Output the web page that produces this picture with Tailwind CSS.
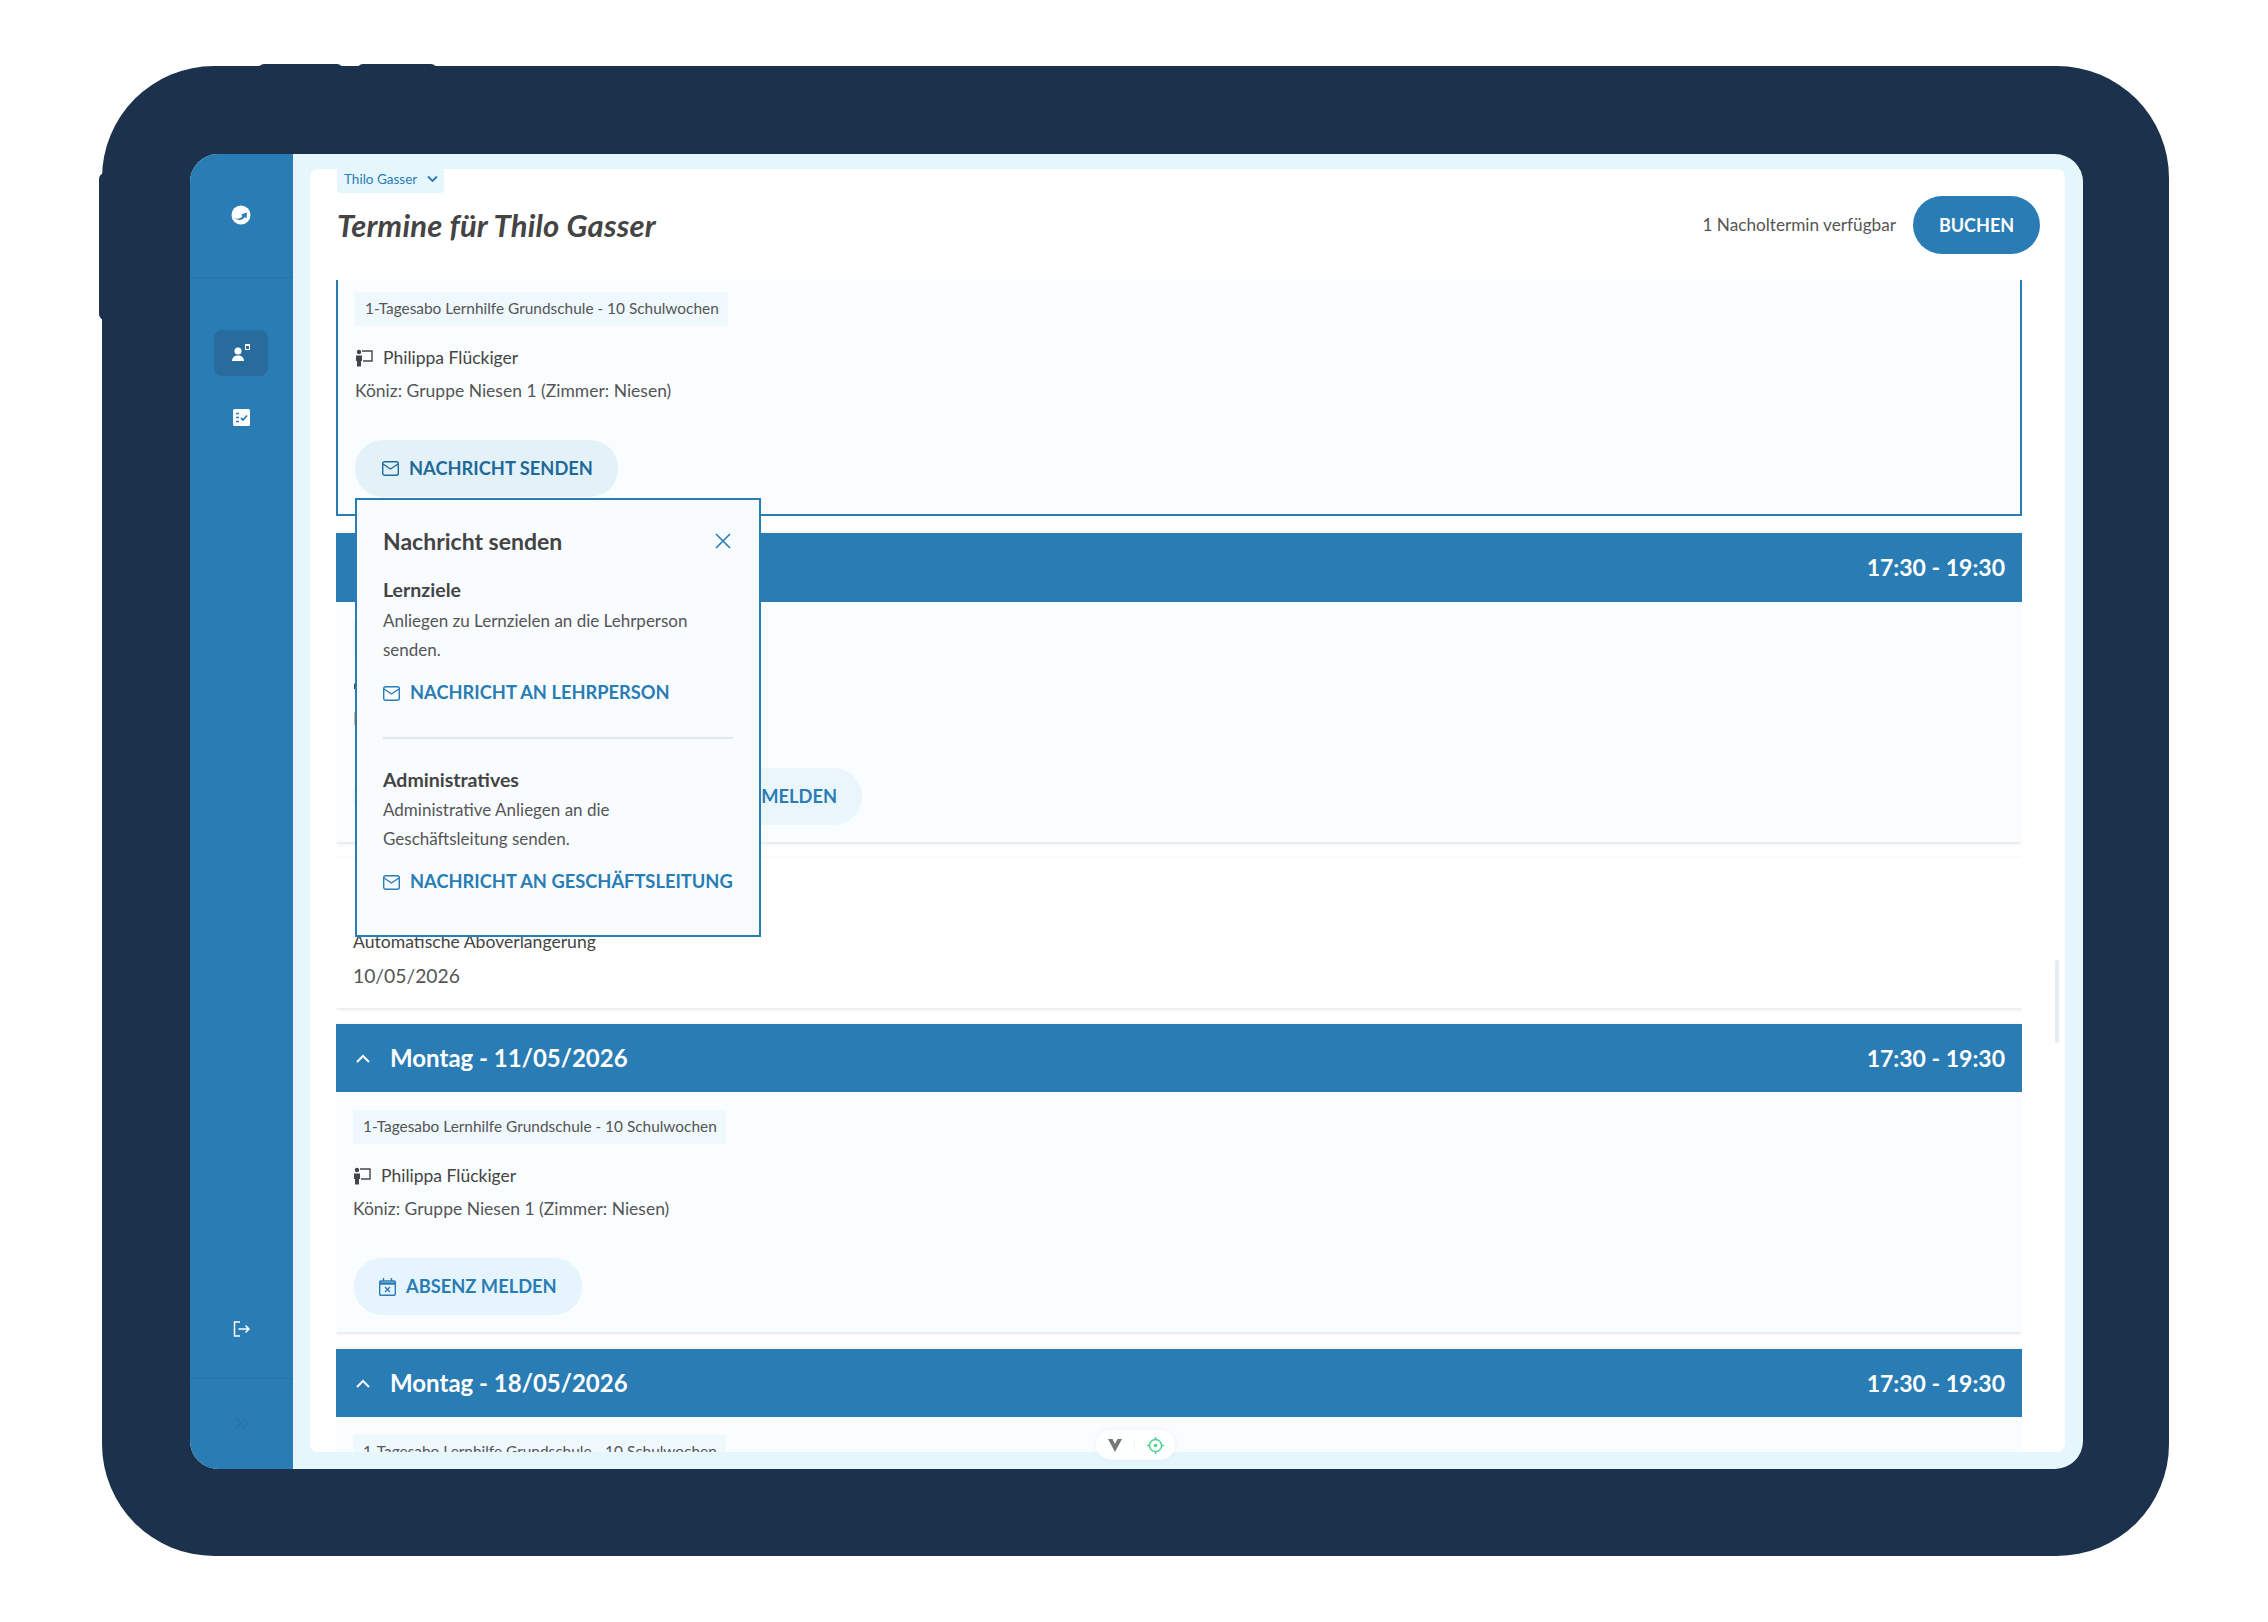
<!DOCTYPE html>
<html lang="de">
<head>
    <meta charset="UTF-8">
    <meta name="viewport" content="width=device-width, initial-scale=1.0">
    <title>Termine</title>
    <script src="https://cdn.jsdelivr.net/npm/@tailwindcss/browser@4"></script>
</head>
<body class="bg-white font-['Lato','Liberation_Sans',sans-serif] text-[#4a4a4a] antialiased">

    <!-- tablet frame -->
    <div class="relative mt-[66px] ml-[102px] w-[2067px] h-[1490px] rounded-[112px] bg-[#1c324c] pt-[88px] pl-[88px]">
        <div class="absolute left-[156px] top-[-2px] w-[85px] h-[6px] rounded-t-md bg-[#1c324c]"></div>
        <div class="absolute left-[255px] top-[-2px] w-[80px] h-[6px] rounded-t-md bg-[#1c324c]"></div>
        <div class="absolute left-[-3px] top-[107px] w-[6px] h-[147px] rounded-l-md bg-[#1c324c]"></div>

        <!-- screen -->
        <div class="flex w-[1893px] h-[1315px] rounded-[28px] overflow-hidden bg-[#e6f6fd]">

            <!-- sidebar -->
            <aside class="flex flex-col items-center w-[103px] shrink-0 bg-[#2a7cb4]">
                <div class="flex items-center justify-center w-full h-[124px] pr-[2px] pb-[1px] border-b border-[#2673a8]">
                    <svg class="w-[20px] h-[20px]" viewBox="0 0 20 20">
                        <circle cx="10" cy="10" r="9.500" fill="#fff"/>
                        <path d="M3 12.500c3 2 6.500 1.500 8.500-1.500L10 9.500l6-2-.5 6-1.700-1.500c-2.500 3.500-7.300 4-10.800.5z" fill="#2a7cb4"/>
                    </svg>
                </div>
                <div class="flex items-center justify-center w-[54px] h-[46px] mt-[52px] mr-[1px] rounded-lg bg-[#286c9e]">
                    <svg class="w-[20px] h-[18px]" viewBox="0 0 20 18" fill="#fff">
                        <circle cx="7" cy="7" r="3.500"/>
                        <path d="M1 17c0-3.500 2.500-5.500 6-5.500s6 2 6 5.500z"/>
                        <path fill-rule="evenodd" d="M14 0h5v6h-5zM15 2v3h3V2z"/>
                    </svg>
                </div>
                <div class="flex items-center justify-center w-full h-[20px] mt-[31px] pr-[1px]">
                    <svg class="w-[17px] h-[17px]" viewBox="0 0 17 17">
                        <rect width="17" height="17" rx="1.500" fill="#fff"/>
                        <path d="M3 4.500h3M3 8.500h3M3 12.500h3" stroke="#2a7cb4" stroke-width="1.500"/>
                        <path d="M8 9l2 2 4-4.500" stroke="#2a7cb4" stroke-width="1.800" fill="none"/>
                    </svg>
                </div>
                <div class="flex items-center justify-center w-full h-[20px] mt-auto mb-[39px] pr-[1px]">
                    <svg class="w-[17px] h-[16px]" viewBox="0 0 17 16" fill="none" stroke="#fff" stroke-width="1.500">
                        <path d="M7 1H1.500v14H7M5.500 8H16M12.500 4.500 16 8l-3.500 3.500"/>
                    </svg>
                </div>
                <div class="flex items-center justify-center w-full h-[91px] pb-[3px] border-t border-[#2673a8]">
                    <svg class="w-[16px] h-[14px]" viewBox="0 0 16 14" fill="none" stroke="#2673a8" stroke-width="1.500">
                        <path d="m1.500 1 6 6-6 6M8 1l6 6-6 6"/>
                    </svg>
                </div>
            </aside>

            <!-- main -->
            <main class="flex-1 min-w-0 pt-[15px] pr-[18px] pb-[17px] pl-[17px]">
                <div class="relative flex flex-col h-full rounded-lg bg-white overflow-hidden">

                    <div class="pl-[27px] pr-[25px]">
                        <div class="flex items-center gap-[10px] w-[107px] h-[24px] pl-[7px] pb-[4px] rounded-b-sm bg-[#e6f6fd] text-[13.5px] text-[#2a7cb4]">
                            Thilo Gasser
                            <svg class="w-[11px] h-[8px]" viewBox="0 0 11 8" fill="none" stroke="#2a7cb4" stroke-width="1.800"><path d="m1 1.500 4.500 4.500L10 1.500"/></svg>
                        </div>
                        <div class="flex items-center justify-between h-[58px] mt-[3px]">
                            <h1 class="text-[31px] tracking-[0.2px] font-bold italic text-[#444]">Termine für Thilo Gasser</h1>
                            <div class="flex items-center gap-[17px]">
                                <span class="text-[17.2px] text-[#555]">1 Nacholtermin verfügbar</span>
                                <button class="w-[127px] h-[58px] rounded-full bg-[#2a7cb4] text-[18px] font-bold text-white">BUCHEN</button>
                            </div>
                        </div>
                    </div>

                    <!-- appointment list -->
                    <div class="flex flex-col gap-[16px] h-0 flex-1 mt-[26px] ml-[26px] mr-[43px] overflow-hidden">

                        <div class="shrink-0 h-[236px] px-[17px] pt-[12px] border-2 border-t-0 border-[#2a7cb4] bg-[#fafdff]">
                            <div class="flex items-center w-[373px] h-[34px] pl-[10px] bg-[#eef8fd] text-[15.4px] text-[#555]">1-Tagesabo Lernhilfe Grundschule - 10 Schulwochen</div>
                            <div class="flex items-center gap-[10px] h-[24px] mt-[20px] text-[17.5px] text-[#444]">
                                <svg class="w-[18px] h-[18px]" viewBox="0 0 18 18"><circle cx="4" cy="3" r="2.200" fill="#444"/><path d="M1 6.500h6V12H6v5.500H2V12H1z" fill="#444"/><path d="M7 2h10v10H8" fill="none" stroke="#444" stroke-width="1.400"/></svg>
                                Philippa Flückiger
                            </div>
                            <div class="flex items-center h-[24px] mt-[9px] text-[17.5px] text-[#555]">Köniz: Gruppe Niesen 1 (Zimmer: Niesen)</div>
                            <button class="flex items-center gap-[10px] w-[263px] h-[57px] mt-[37px] pl-[27px] rounded-[28px] bg-[#e3f1f9] text-[18.3px] font-bold text-[#1f6a99]">
                                <svg class="w-[17px] h-[15px]" viewBox="0 0 17 15" fill="none" stroke="#1f6a99" stroke-width="1.400"><rect x=".7" y=".7" width="15.600" height="13.600" rx="2"/><path d="m1 3 7.500 5L16 3"/></svg>
                                NACHRICHT SENDEN
                            </button>
                        </div>

                        <div class="shrink-0 mt-[1px] shadow-[0_1px_4px_rgba(0,0,0,0.14)] bg-[#fafdff]">
                            <div class="flex items-center justify-between h-[69px] pl-[20px] pr-[17px] bg-[#2a7cb4] text-white font-bold">
                                <div class="flex items-center gap-[20px] text-[24px]">
                                    <svg class="w-[14px] h-[9px]" viewBox="0 0 14 9" fill="none" stroke="#fff" stroke-width="2"><path d="m1 8 6-6 6 6"/></svg>
                                    Montag - 04/05/2026
                                </div>
                                <span class="text-[23px]">17:30 - 19:30</span>
                            </div>
                            <div class="h-[240px] px-[17px] pt-[18px]">
                                <div class="flex items-center w-[373px] h-[34px] pl-[10px] bg-[#eef8fd] text-[15.4px] text-[#555]">1-Tagesabo Lernhilfe Grundschule - 10 Schulwochen</div>
                                <div class="flex items-center gap-[10px] h-[24px] mt-[20px] text-[17.5px] text-[#444]">
                                    <svg class="w-[18px] h-[18px]" viewBox="0 0 18 18"><circle cx="4" cy="3" r="2.200" fill="#444"/><path d="M1 6.500h6V12H6v5.500H2V12H1z" fill="#444"/><path d="M7 2h10v10H8" fill="none" stroke="#444" stroke-width="1.400"/></svg>
                                    Philippa Flückiger
                                </div>
                                <div class="flex items-center h-[24px] mt-[9px] text-[17.5px] text-[#555]">Köniz: Gruppe Niesen 1 (Zimmer: Niesen)</div>
                                <button class="flex items-center justify-end w-[509px] h-[57px] mt-[37px] pr-[25px] rounded-[28px] bg-[#eaf6fc] text-[18.3px] font-bold text-[#2a7cb4]">ABSENZ MELDEN</button>
                            </div>
                        </div>

                        <div class="shrink-0 h-[150px] pl-[17px] pt-[71px] shadow-[0_1px_4px_rgba(0,0,0,0.12)] bg-white">
                            <div class="h-[24px] text-[17.6px] text-[#444]">Automatische Aboverlängerung</div>
                            <div class="h-[24px] mt-[9px] text-[19.3px] text-[#555]">10/05/2026</div>
                        </div>

                        <div class="shrink-0 shadow-[0_1px_4px_rgba(0,0,0,0.14)] bg-[#fafdff]">
                            <div class="flex items-center justify-between h-[68px] pl-[20px] pr-[17px] bg-[#2a7cb4] text-white font-bold">
                                <div class="flex items-center gap-[20px] text-[24px]">
                                    <svg class="w-[14px] h-[9px]" viewBox="0 0 14 9" fill="none" stroke="#fff" stroke-width="2"><path d="m1 8 6-6 6 6"/></svg>
                                    Montag - 11/05/2026
                                </div>
                                <span class="text-[23px]">17:30 - 19:30</span>
                            </div>
                            <div class="h-[240px] px-[17px] pt-[18px]">
                                <div class="flex items-center w-[373px] h-[34px] pl-[10px] bg-[#eef8fd] text-[15.4px] text-[#555]">1-Tagesabo Lernhilfe Grundschule - 10 Schulwochen</div>
                                <div class="flex items-center gap-[10px] h-[24px] mt-[20px] text-[17.5px] text-[#444]">
                                    <svg class="w-[18px] h-[18px]" viewBox="0 0 18 18"><circle cx="4" cy="3" r="2.200" fill="#444"/><path d="M1 6.500h6V12H6v5.500H2V12H1z" fill="#444"/><path d="M7 2h10v10H8" fill="none" stroke="#444" stroke-width="1.400"/></svg>
                                    Philippa Flückiger
                                </div>
                                <div class="flex items-center h-[24px] mt-[9px] text-[17.5px] text-[#555]">Köniz: Gruppe Niesen 1 (Zimmer: Niesen)</div>
                                <button class="flex items-center gap-[10px] w-[228px] h-[57px] mt-[37px] ml-[1px] pl-[25px] rounded-[28px] bg-[#e6f5fd] text-[18.3px] font-bold text-[#2a7cb4]">
                                    <svg class="w-[17px] h-[18px]" viewBox="0 0 17 18" fill="none" stroke="#2a7cb4" stroke-width="1.400"><rect x=".7" y="3" width="15.600" height="14.300" rx="1"/><path d="M1 5.500h15" stroke-width="2.500"/><path d="M4.500 0v3M12.500 0v3M6 9l5 5M11 9l-5 5"/></svg>
                                    ABSENZ MELDEN
                                </button>
                            </div>
                        </div>

                        <div class="shrink-0 mt-[1px] shadow-[0_1px_4px_rgba(0,0,0,0.14)] bg-[#fafdff]">
                            <div class="flex items-center justify-between h-[68px] pl-[20px] pr-[17px] bg-[#2a7cb4] text-white font-bold">
                                <div class="flex items-center gap-[20px] text-[24px]">
                                    <svg class="w-[14px] h-[9px]" viewBox="0 0 14 9" fill="none" stroke="#fff" stroke-width="2"><path d="m1 8 6-6 6 6"/></svg>
                                    Montag - 18/05/2026
                                </div>
                                <span class="text-[23px]">17:30 - 19:30</span>
                            </div>
                            <div class="h-[240px] px-[17px] pt-[18px]">
                                <div class="flex items-center w-[373px] h-[34px] pl-[10px] bg-[#eef8fd] text-[15.4px] text-[#555]">1-Tagesabo Lernhilfe Grundschule - 10 Schulwochen</div>
                            </div>
                        </div>
                    </div>

                    <!-- scrollbar -->
                    <div class="absolute left-[1745px] top-[791px] w-[4px] h-[83px] rounded-full bg-[#e3edf3]"></div>

                    <!-- message popover -->
                    <div class="absolute left-[45px] top-[329px] w-[406px] h-[439px] pt-[25px] px-[26px] border-2 border-[#2a7cb4] bg-[#f8fcff]">
                        <div class="flex items-center justify-between h-[32px] pr-[2px]">
                            <h2 class="text-[23px] font-bold text-[#444]">Nachricht senden</h2>
                            <svg class="w-[16px] h-[16px]" viewBox="0 0 16 16" fill="none" stroke="#2a7cb4" stroke-width="1.600"><path d="m1 1 14 14M15 1 1 15"/></svg>
                        </div>
                        <div class="mt-[20px] h-[26px] text-[19.5px] leading-[26px] font-bold text-[#444]">Lernziele</div>
                        <p class="w-[330px] mt-[3px] text-[17px] leading-[29px] text-[#555]">Anliegen zu Lernzielen an die Lehrperson senden.</p>
                        <div class="flex items-center gap-[10px] h-[28px] mt-[15px] text-[18.3px] font-bold text-[#2a7cb4]">
                            <svg class="w-[17px] h-[15px]" viewBox="0 0 17 15" fill="none" stroke="#2a7cb4" stroke-width="1.400"><rect x=".7" y=".7" width="15.600" height="13.600" rx="2"/><path d="m1 3 7.500 5L16 3"/></svg>
                            NACHRICHT AN LEHRPERSON
                        </div>
                        <div class="h-[2px] mt-[30px] bg-[#dfe8ee]"></div>
                        <div class="mt-[28px] h-[26px] text-[19.5px] leading-[26px] font-bold text-[#444]">Administratives</div>
                        <p class="w-[330px] mt-[2px] text-[17px] leading-[29px] text-[#555]">Administrative Anliegen an die Geschäftsleitung senden.</p>
                        <div class="flex items-center gap-[10px] h-[28px] mt-[15px] text-[18.3px] font-bold text-[#2a7cb4]">
                            <svg class="w-[17px] h-[15px]" viewBox="0 0 17 15" fill="none" stroke="#2a7cb4" stroke-width="1.400"><rect x=".7" y=".7" width="15.600" height="13.600" rx="2"/><path d="m1 3 7.500 5L16 3"/></svg>
                            NACHRICHT AN GESCHÄFTSLEITUNG
                        </div>
                    </div>
                </div>
            </main>
        </div>

        <!-- floating dev toolbar -->
        <div class="absolute left-[994px] top-[1364px] flex items-center justify-center gap-[12px] w-[79px] h-[30px] rounded-full bg-white/90 shadow-[0_0_6px_rgba(0,0,0,0.05)]">
            <svg class="w-[14px] h-[13px]" viewBox="0 0 14 13"><path d="M0 0h14L7 13z" fill="#777"/><path d="M4.500 0h5L7 5z" fill="#fff"/></svg>
            <div class="w-[1px] h-[14px] bg-gray-100"></div>
            <svg class="w-[17px] h-[17px]" viewBox="0 0 17 17" fill="none" stroke="#4ed18f" stroke-width="1.500"><circle cx="8.500" cy="8.500" r="6"/><circle cx="8.500" cy="8.500" r="1" fill="#4ed18f"/><path d="M8.500 0v2.500M8.500 14.500V17M0 8.500h2.500M14.500 8.500H17"/></svg>
        </div>
    </div>

</body>
</html>
